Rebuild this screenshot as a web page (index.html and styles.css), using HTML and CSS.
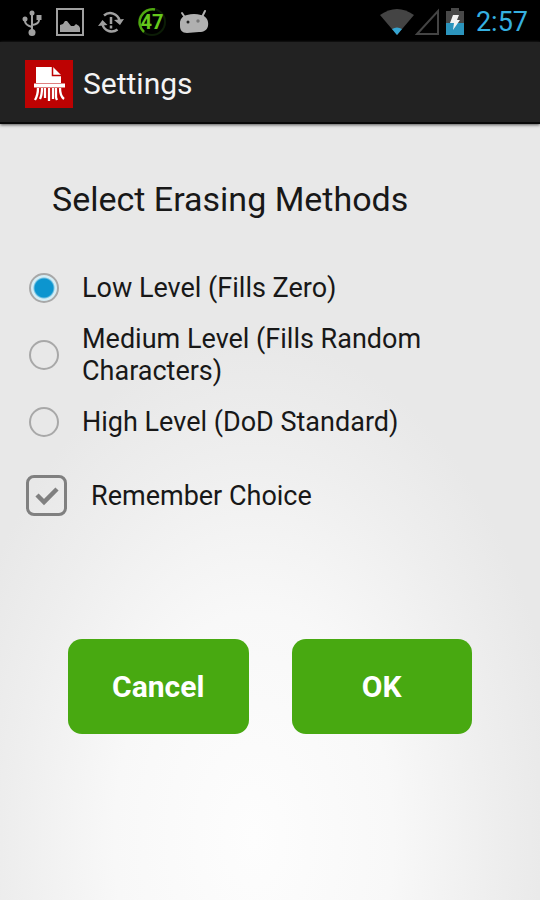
FILE: index.html
```html
<!DOCTYPE html>
<html lang="en">
<head>
<meta charset="utf-8">
<meta name="viewport" content="width=device-width, initial-scale=1">
<title>Settings</title>
<link rel="stylesheet" href="styles.css">
</head>
<body>
<div class="status-bar">
  <div class="notifications">
    <svg class="icon" width="20" height="28" viewBox="0 0 20 28" fill="none" stroke="#a0a0a0" stroke-width="2">
      <path d="M10 5v18M3 12v1q0 4 7 6M17 10v2q0 4-7 5"/>
      <circle cx="10" cy="5" r="2.500" fill="#a0a0a0" stroke="none"/>
      <circle cx="3" cy="11" r="2.500" fill="#a0a0a0" stroke="none"/>
      <path d="M14.500 7h5v5h-5z" fill="#a0a0a0" stroke="none"/>
      <circle cx="10" cy="24.500" r="3.500" fill="#a0a0a0" stroke="none"/>
    </svg>
    <svg class="icon" width="28" height="28" viewBox="0 0 28 28">
      <path d="M1 1h26v26H1z" fill="none" stroke="#a0a0a0" stroke-width="2"/>
      <path d="M4 24v-7l3-1 2-3h2l4 5 3 0 2-2 3 2 1 2v4z" fill="#a0a0a0"/>
    </svg>
    <svg class="icon" width="26" height="28" viewBox="0 0 26 28" fill="none" stroke="#a0a0a0" stroke-width="2.500">
      <path d="M6 7.500a9.500 9.500 0 0 1 15.500 5M19.500 21.500a9.500 9.500 0 0 1-15-5"/>
      <path d="M16 12l10-1-4 6zM0 18l4.500-6 5 5z" fill="#a0a0a0" stroke="none"/>
      <path d="M13 9v7M13 17.500v3" stroke-width="2.500"/>
    </svg>
    <div class="battery-level">
      <svg class="ring" width="28" height="30" viewBox="0 0 28 30" fill="none">
        <circle cx="14" cy="15" r="13" stroke="#0c1d06" stroke-width="2"/>
        <path d="M17 2.500A13 13 0 0 0 6 25" stroke="#50a810" stroke-width="2.500"/>
      </svg>
      <span>47</span>
    </div>
    <svg class="icon" width="30" height="28" viewBox="1 0 30 28">
      <path d="M3 5l4 6M26 3l-3 6" stroke="#b0b0b0" stroke-width="2" stroke-linecap="round"/>
      <path d="M1 18C0 12 3 8 8 7q7-2 14 0c5 1 8 5 7 11-1 4-4 6-9 6l-12 1C3 25 1 22 1 18z" fill="#b0b0b0"/>
      <circle cx="9" cy="14" r="1.500" fill="#222"/><circle cx="19" cy="13" r="1.700" fill="#777"/>
    </svg>
  </div>
  <div class="system">
    <svg class="icon" width="34" height="28" viewBox="0 0 34 28">
      <path d="M0 7Q17-5 34 7L17 27z" fill="#444"/>
      <path d="M12 21q5-3 10 0l-5 6z" fill="#35a5d2"/>
    </svg>
    <svg class="icon" width="26" height="28" viewBox="0 0 26 28">
      <path d="M24 3v23H3z" fill="none" stroke="#444" stroke-width="2"/>
    </svg>
    <svg class="icon battery" width="18" height="28" viewBox="0 0 18 28">
      <path d="M5 0h8v3h5v12H0V3h5z" fill="#484848"/>
      <path d="M0 15h18v12H0z" fill="#2b94bd"/>
      <path d="M7 7h6l-2 5h3L7 22l1-7H4z" fill="#f2f2f2"/>
    </svg>
    <time class="clock">2:57</time>
  </div>
</div>
<header class="action-bar">
  <svg class="logo" width="48" height="48" viewBox="0 0 48 48">
    <path d="M0 0h48v48H0z" fill="#bd0202"/>
    <path d="M11 7h17l8 8v8H11z" fill="#fff"/>
    <path d="M27.500 7v8.500H36" fill="none" stroke="#bd0202" stroke-width="1.500"/>
    <path d="M9 23.500h31v4H9z" fill="#fff"/>
    <path d="M13 28q0 7-3 12M17 28q0 7-2 11M20 28v10M24 28v13M28 28v11M31 28v9q0 1 1 3M35 28q0 8 4 11" fill="none" stroke="#fff" stroke-width="2.300"/>
  </svg>
  <h1>Settings</h1>
</header>
<main>
  <form>
    <h2 id="methods">Select Erasing Methods</h2>
    <div class="methods" role="radiogroup" aria-labelledby="methods">
      <label class="method"><input type="radio" name="method" checked><span>Low Level (Fills Zero)</span></label>
      <label class="method"><input type="radio" name="method"><span>Medium Level (Fills Random Characters)</span></label>
      <label class="method"><input type="radio" name="method"><span>High Level (DoD Standard)</span></label>
    </div>
    <label class="remember">
      <span class="check">
        <input type="checkbox" checked>
        <svg class="tick" width="24" height="20" viewBox="0 0 24 20"><path d="M2 9l7 7L22 3" fill="none" stroke="#808080" stroke-width="4.500"/></svg>
      </span>
      <span>Remember Choice</span>
    </label>
    <div class="actions">
      <button type="button">Cancel</button>
      <button type="button">OK</button>
    </div>
  </form>
</main>
</body>
</html>
```
FILE: styles.css
```css
* {
  box-sizing: border-box;
}

body {
  margin: 0;
  min-height: 100vh;
  display: flex;
  flex-direction: column;
  font-family: Roboto, "Liberation Sans", sans-serif;
  color: #181818;
}

svg {
  display: block;
}

.status-bar {
  display: flex;
  justify-content: space-between;
  align-items: center;
  height: 42px;
  padding: 2px 12px 0 22px;
  background: #000;
}

.notifications,
.system {
  display: flex;
  align-items: center;
}

.notifications {
  gap: 14px;
}

.battery-level {
  display: grid;
  place-items: center;
  color: #66c81c;
  font-size: 20px;
  font-weight: 700;
  line-height: 24px;
}

.battery-level > * {
  grid-area: 1 / 1;
}

.battery {
  margin: 0 12px 0 6px;
}

.clock {
  color: #35b0e0;
  font-size: 27px;
  line-height: 32px;
}

.action-bar {
  display: flex;
  align-items: center;
  gap: 10px;
  height: 82px;
  padding: 4px 25px 0;
  background: #222;
  border-bottom: 2px solid #080808;
  box-shadow: 0 1px 3px #555;
  z-index: 1;
}

h1 {
  margin: 0;
  color: #f4f4f4;
  font-size: 30px;
  line-height: 36px;
  font-weight: 400;
}

main {
  flex: 1;
  padding: 54px 24px 24px;
  background: radial-gradient(ellipse 310px 500px at 47% 92%, #fdfdfd 0%, #f8f8f8 45%, #eee 78%, #e8e8e8 100%);
}

h2 {
  margin: 0 28px 34px;
  font-size: 34px;
  line-height: 42px;
  font-weight: 400;
}

.method {
  display: flex;
  align-items: center;
  gap: 23px;
  min-height: 67px;
  padding: 0 64px 0 5px;
  font-size: 27px;
  line-height: 32px;
}

.method input {
  appearance: none;
  flex: none;
  width: 30px;
  height: 30px;
  margin: 0;
  border: 2px solid #a8a8a8;
  border-radius: 50%;
}

.method input:checked {
  background: radial-gradient(circle, #0c95cf 9px, #d5edf5 11px);
}

.remember {
  display: flex;
  align-items: center;
  gap: 24px;
  margin-top: 20px;
  padding-left: 2px;
  font-size: 27px;
  line-height: 32px;
}

.check {
  display: grid;
  place-items: center;
}

.check > * {
  grid-area: 1 / 1;
}

.check input {
  appearance: none;
  width: 41px;
  height: 41px;
  margin: 0;
  border: 3px solid #808080;
  border-radius: 8px;
}

.tick {
  pointer-events: none;
}

.actions {
  display: flex;
  gap: 43px;
  margin: 123px 44px 0;
}

button {
  flex: 1;
  height: 95px;
  padding: 0;
  border: 0;
  border-radius: 14px;
  background: #48a911;
  color: #fff;
  font: 700 30px/36px Roboto, "Liberation Sans", sans-serif;
}
```
